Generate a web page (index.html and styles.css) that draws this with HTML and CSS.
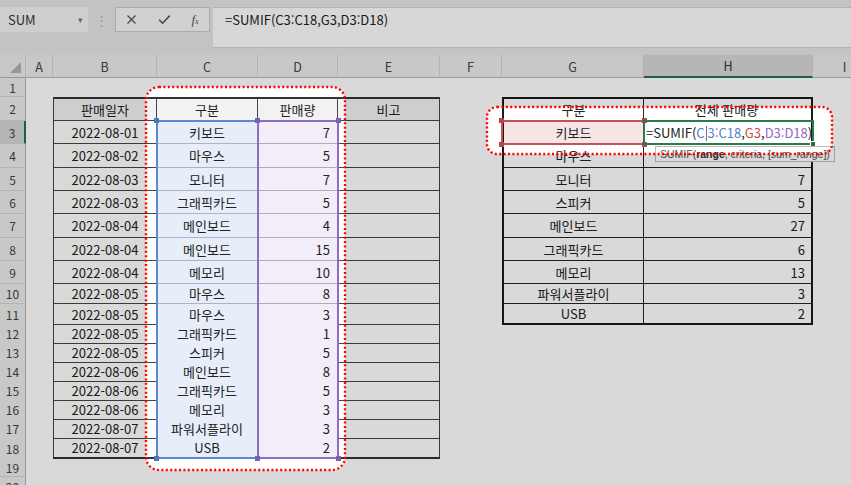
FILE: index.html
```html
<!DOCTYPE html>
<html lang="ko">
<head>
<meta charset="utf-8">
<title>SUMIF</title>
<link rel="stylesheet" href="styles.css">
</head>
<body>
<div class="sheet">
  <div class="topbar">
    <div class="namebox"><span>SUM</span><span class="caret">&#9662;</span></div>
    <div class="sep">&#8942;</div>
    <div class="fnbtns">
      <svg class="ico" width="11" height="11" viewBox="0 0 11 11"><path d="M1.5 1.5L9.5 9.5M9.5 1.5L1.5 9.5" stroke="#555" stroke-width="1.3" fill="none"/></svg>
      <svg class="ico" width="13" height="11" viewBox="0 0 13 11"><path d="M1.2 5.8L4.6 9.2L11.8 1.6" stroke="#555" stroke-width="1.6" fill="none"/></svg>
      <span class="fx"><i>f</i><span class="fxs">x</span></span>
    </div>
    <div class="formula">=SUMIF(C3:C18,G3,D3:D18)</div>
  </div>

  <div class="grid">
    <div class="row h23">
      <div class="ch corner"><span class="tri"></span></div>
      <div class="ch">A</div><div class="ch">B</div><div class="ch">C</div><div class="ch">D</div><div class="ch">E</div><div class="ch">F</div><div class="ch">G</div><div class="ch selh">H</div><div class="ch">I</div>
    </div>
    <div class="row h19">
      <div class="rh">1</div><div class="c"></div><div class="c"></div><div class="c"></div><div class="c"></div><div class="c"></div><div class="c"></div><div class="c"></div><div class="c"></div><div class="c"></div>
    </div>
    <div class="row h24">
      <div class="rh">2</div><div class="c"></div>
      <div class="c ctr tb tl tt hd">판매일자</div><div class="c ctr tb tt hd">구분</div><div class="c ctr tb tt hd">판매량</div><div class="c ctr tb tt hd">비고</div>
      <div class="c"></div>
      <div class="c ctr rb rl rt">구분</div><div class="c ctr rb rr rt">전체 판매량</div><div class="c"></div>
    </div>
    <div class="row h23">
      <div class="rh selr">3</div><div class="c"></div>
      <div class="c ctr tb tl">2022-08-01</div><div class="c ctr tb sc">키보드</div><div class="c num tb sd">7</div><div class="c tb"></div>
      <div class="c"></div>
      <div class="c ctr rb rl sg">키보드</div>
      <div class="c edit rb rr">=SUMIF(<span class="fb">C<span class="cur"></span>3:C18</span>,<span class="fr">G3</span>,<span class="fp">D3:D18</span>)</div>
      <div class="c"></div>
    </div>
    <div class="row h24">
      <div class="rh">4</div><div class="c"></div>
      <div class="c ctr tb tl">2022-08-02</div><div class="c ctr tb sc">마우스</div><div class="c num tb sd">5</div><div class="c tb"></div>
      <div class="c"></div>
      <div class="c ctr rb rl">마우스</div><div class="c num rb rr"></div><div class="c"></div>
    </div>
    <div class="row h23">
      <div class="rh">5</div><div class="c"></div>
      <div class="c ctr tb tl">2022-08-03</div><div class="c ctr tb sc">모니터</div><div class="c num tb sd">7</div><div class="c tb"></div>
      <div class="c"></div>
      <div class="c ctr rb rl">모니터</div><div class="c num rb rr">7</div><div class="c"></div>
    </div>
    <div class="row h23">
      <div class="rh">6</div><div class="c"></div>
      <div class="c ctr tb tl">2022-08-03</div><div class="c ctr tb sc">그래픽카드</div><div class="c num tb sd">5</div><div class="c tb"></div>
      <div class="c"></div>
      <div class="c ctr rb rl">스피커</div><div class="c num rb rr">5</div><div class="c"></div>
    </div>
    <div class="row h24">
      <div class="rh">7</div><div class="c"></div>
      <div class="c ctr tb tl">2022-08-04</div><div class="c ctr tb sc">메인보드</div><div class="c num tb sd">4</div><div class="c tb"></div>
      <div class="c"></div>
      <div class="c ctr rb rl">메인보드</div><div class="c num rb rr">27</div><div class="c"></div>
    </div>
    <div class="row h23">
      <div class="rh">8</div><div class="c"></div>
      <div class="c ctr tb tl">2022-08-04</div><div class="c ctr tb sc">메인보드</div><div class="c num tb sd">15</div><div class="c tb"></div>
      <div class="c"></div>
      <div class="c ctr rb rl">그래픽카드</div><div class="c num rb rr">6</div><div class="c"></div>
    </div>
    <div class="row h23">
      <div class="rh">9</div><div class="c"></div>
      <div class="c ctr tb tl">2022-08-04</div><div class="c ctr tb sc">메모리</div><div class="c num tb sd">10</div><div class="c tb"></div>
      <div class="c"></div>
      <div class="c ctr rb rl">메모리</div><div class="c num rb rr">13</div><div class="c"></div>
    </div>
    <div class="row h20">
      <div class="rh">10</div><div class="c"></div>
      <div class="c ctr tb tl">2022-08-05</div><div class="c ctr tb sc">마우스</div><div class="c num tb sd">8</div><div class="c tb"></div>
      <div class="c"></div>
      <div class="c ctr rb rl">파워서플라이</div><div class="c num rb rr">3</div><div class="c"></div>
    </div>
    <div class="row h20">
      <div class="rh">11</div><div class="c"></div>
      <div class="c ctr tb tl">2022-08-05</div><div class="c ctr tb sc">마우스</div><div class="c num tb sd">3</div><div class="c tb"></div>
      <div class="c"></div>
      <div class="c ctr rb rl rbot">USB</div><div class="c num rb rr rbot">2</div><div class="c"></div>
    </div>
    <div class="row h19">
      <div class="rh">12</div><div class="c"></div>
      <div class="c ctr tb tl">2022-08-05</div><div class="c ctr tb sc">그래픽카드</div><div class="c num tb sd">1</div><div class="c tb"></div>
      <div class="c"></div><div class="c"></div><div class="c"></div><div class="c"></div>
    </div>
    <div class="row h19">
      <div class="rh">13</div><div class="c"></div>
      <div class="c ctr tb tl">2022-08-05</div><div class="c ctr tb sc">스피커</div><div class="c num tb sd">5</div><div class="c tb"></div>
      <div class="c"></div><div class="c"></div><div class="c"></div><div class="c"></div>
    </div>
    <div class="row h19">
      <div class="rh">14</div><div class="c"></div>
      <div class="c ctr tb tl">2022-08-06</div><div class="c ctr tb sc">메인보드</div><div class="c num tb sd">8</div><div class="c tb"></div>
      <div class="c"></div><div class="c"></div><div class="c"></div><div class="c"></div>
    </div>
    <div class="row h19">
      <div class="rh">15</div><div class="c"></div>
      <div class="c ctr tb tl">2022-08-06</div><div class="c ctr tb sc">그래픽카드</div><div class="c num tb sd">5</div><div class="c tb"></div>
      <div class="c"></div><div class="c"></div><div class="c"></div><div class="c"></div>
    </div>
    <div class="row h19">
      <div class="rh">16</div><div class="c"></div>
      <div class="c ctr tb tl">2022-08-06</div><div class="c ctr tb sc">메모리</div><div class="c num tb sd">3</div><div class="c tb"></div>
      <div class="c"></div><div class="c"></div><div class="c"></div><div class="c"></div>
    </div>
    <div class="row h19">
      <div class="rh">17</div><div class="c"></div>
      <div class="c ctr tb tl">2022-08-07</div><div class="c ctr tb sc">파워서플라이</div><div class="c num tb sd">3</div><div class="c tb"></div>
      <div class="c"></div><div class="c"></div><div class="c"></div><div class="c"></div>
    </div>
    <div class="row h20">
      <div class="rh">18</div><div class="c"></div>
      <div class="c ctr tb tl tbot">2022-08-07</div><div class="c ctr tb sc tbot">USB</div><div class="c num tb sd tbot">2</div><div class="c tb tbot"></div>
      <div class="c"></div><div class="c"></div><div class="c"></div><div class="c"></div>
    </div>
    <div class="row h19">
      <div class="rh">19</div><div class="c"></div><div class="c"></div><div class="c"></div><div class="c"></div><div class="c"></div><div class="c"></div><div class="c"></div><div class="c"></div><div class="c"></div>
    </div>
    <div class="row h19">
      <div class="rh">20</div><div class="c"></div><div class="c"></div><div class="c"></div><div class="c"></div><div class="c"></div><div class="c"></div><div class="c"></div><div class="c"></div><div class="c"></div>
    </div>
  </div>

  <div class="rng rng-c"><span class="hdl tl-h"></span><span class="hdl bl-h"></span></div>
  <div class="rng rng-d"><span class="hdl tl-h"></span><span class="hdl tr-h"></span><span class="hdl bl-h"></span><span class="hdl br-h"></span></div>
  <div class="rng rng-g"><span class="hdl tl-h"></span><span class="hdl tr-h"></span><span class="hdl bl-h"></span><span class="hdl br-h"></span></div>
  <div class="rng rng-h"><span class="hdl br-h fill"></span></div>

  <div class="tip">SUMIF(<b>range</b>, criteria, [sum_range])</div>

  <svg class="dim" width="851" height="485" viewBox="0 0 851 485">
    <path fill="#000" fill-opacity="0.15" fill-rule="evenodd" d="M0 0H851V485H0Z M159 87H332A13 13 0 0 1 345 100V457A13 13 0 0 1 332 470H159A13 13 0 0 1 146 457V100A13 13 0 0 1 159 87Z M497 107H822A10 10 0 0 1 832 117V144A10 10 0 0 1 822 154H497A10 10 0 0 1 487 144V117A10 10 0 0 1 497 107Z"/>
    <rect x="146" y="87" width="199" height="383" rx="13" ry="13" fill="none" stroke="#f00" stroke-width="2.4" stroke-dasharray="2 2.4"/>
    <rect x="487" y="107" width="345" height="47" rx="10" ry="10" fill="none" stroke="#f00" stroke-width="2.4" stroke-dasharray="2 2.4"/>
  </svg>
</div>
</body>
</html>
```

FILE: styles.css
```css
* { box-sizing: border-box; }
html, body { margin: 0; padding: 0; }
body {
  width: 851px;
  height: 485px;
  overflow: hidden;
  background: #e6e6e6;
  font-family: "Noto Sans CJK KR", "Noto Sans", sans-serif;
  color: #222;
}
.sheet { position: relative; width: 851px; height: 485px; overflow: hidden; }

/* formula bar */
.topbar {
  display: flex;
  align-items: flex-start;
  height: 55px;
  padding-top: 7px;
  background: #e6e6e6;
}
.namebox {
  width: 88px;
  height: 25px;
  display: flex;
  align-items: center;
  justify-content: space-between;
  padding: 0 5px 0 8px;
  background: #f3f3f3;
  font-size: 13px;
  color: #333;
}
.caret { font-size: 9px; color: #777; }
.sep { width: 27px; text-align: center; color: #b0b0b0; font-size: 13px; line-height: 25px; }
.fnbtns {
  width: 95px;
  height: 25px;
  display: flex;
  align-items: center;
  justify-content: space-around;
  background: #f6f6f6;
  border: 1px solid #c9c9c9;
}
.ico { display: block; }
.fx { font-family: "Liberation Serif", serif; font-size: 13px; color: #555; }
.fxs { font-size: 8px; font-style: italic; }
.formula {
  flex: 1;
  height: 41px;
  margin-left: 3px;
  background: #fdfdfd;
  border-top: 1px solid #d2d2d2;
  border-bottom: 1px solid #d2d2d2;
  padding: 0 0 0 12px;
  font-size: 13px;
  line-height: 23px;
  color: #222;
}

/* grid */
.grid { width: 877px; }
.row {
  display: grid;
  grid-template-columns: 26px 27px 104px 101px 80px 102px 62px 142px 169px 64px;
  background: #fff;
}
.h19 { height: 19px; }
.h20 { height: 20px; }
.h23 { height: 23px; }
.h24 { height: 24px; }

.ch {
  display: flex;
  align-items: center;
  justify-content: center;
  background: #ebebeb;
  border-right: 1px solid #d3d3d3;
  border-bottom: 1px solid #b5b5b5;
  font-size: 12.5px;
  color: #444;
}
.corner { position: relative; }
.tri {
  position: absolute;
  right: 4px;
  bottom: 4px;
  width: 0;
  height: 0;
  border-left: 11px solid transparent;
  border-bottom: 11px solid #b3b3b3;
}
.selh { background: #d6d6d6; border-bottom: 2px solid #217346; color: #333; }
.rh {
  display: flex;
  align-items: center;
  justify-content: center;
  background: #ebebeb;
  border-bottom: 1px solid #d3d3d3;
  border-right: 1px solid #b5b5b5;
  font-size: 12px;
  color: #444;
}
.selr { background: #d6d6d6; border-right: 2px solid #217346; }

.c {
  display: flex;
  align-items: center;
  padding: 0 4px;
  font-size: 13px;
  white-space: nowrap;
  min-width: 0;
}
.ctr { justify-content: center; }
.num { justify-content: flex-end; padding-right: 7px; }

/* left table */
.tb { border-right: 1px solid #454545; border-bottom: 1px solid #454545; }
.tl { border-left: 1px solid #454545; }
.tt { border-top: 2px solid #333; }
.tbot { border-bottom: 2px solid #333; }
.hd { background: #f2f2f2; }
.sc { background: #e7eef9; border-bottom-color: #a9b4c4; }
.sd { background: #f2edf8; border-bottom-color: #b1a9bf; }
.tbot.sc, .tbot.sd { border-bottom-color: #333; }

/* right table */
.rb { border-right: 1px solid #262626; border-bottom: 1px solid #262626; }
.rl { border-left: 2px solid #1a1a1a; }
.rr { border-right: 2px solid #1a1a1a; padding-right: 6px; }
.rt { border-top: 2px solid #1a1a1a; }
.rbot { border-bottom: 2px solid #1a1a1a; }
.sg { background: #f8e6e6; }
.edit { padding-left: 2px; color: #222; }
.fb { color: #4f83cc; }
.fr { color: #c0504d; }
.fp { color: #8a6cbf; }
.cur {
  display: inline-block;
  width: 1px;
  height: 15px;
  background: #777;
  vertical-align: -3px;
  margin: 0 1px;
}

/* range highlight overlays */
.rng { position: absolute; border: 2px solid; }
.rng-c { left: 156px; top: 120px; width: 103px; height: 339px; border-color: #5a89cc; }
.rng-d { left: 257px; top: 120px; width: 82px; height: 339px; border-color: #8d6fc2; }
.rng-g { left: 501px; top: 120px; width: 144px; height: 25px; border-color: #c25359; }
.rng-h { left: 643px; top: 120px; width: 171px; height: 25px; border-color: #2a7a4b; }
.hdl { position: absolute; width: 5px; height: 5px; background: inherit; }
.rng-c .hdl { background: #4a78bb; }
.rng-d .hdl { background: #7f5fb6; }
.rng-g .hdl { background: #b4474d; }
.rng-h .hdl { background: #217346; border: 1px solid #fff; width: 6px; height: 6px; }
.tl-h { left: -4px; top: -4px; }
.tr-h { right: -4px; top: -4px; }
.bl-h { left: -4px; bottom: -4px; }
.br-h { right: -4px; bottom: -4px; }

/* tooltip */
.tip {
  position: absolute;
  left: 655px;
  top: 146px;
  height: 16px;
  padding: 0 4px;
  background: #fff;
  border: 1px solid #bcbcbc;
  font-family: "Liberation Sans", Arial, sans-serif;
  font-size: 10.5px;
  line-height: 14px;
  color: #555;
  white-space: nowrap;
}
.tip b { color: #333; }

.dim { position: absolute; left: 0; top: 0; pointer-events: none; }
```
